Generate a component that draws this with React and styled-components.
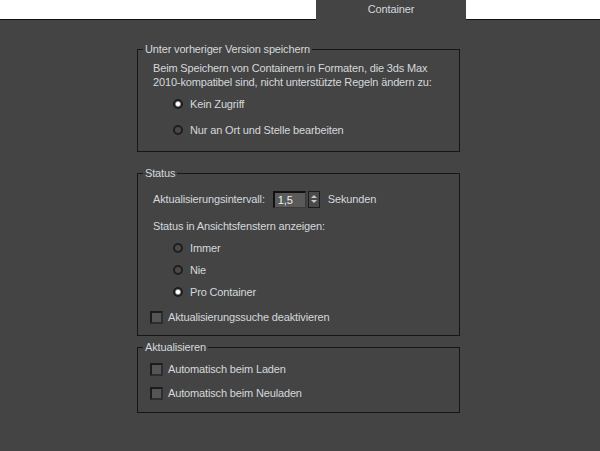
import styled, { createGlobalStyle } from "styled-components";

const GlobalStyle = createGlobalStyle`
  html, body {
    margin: 0;
    padding: 0;
    background: #444444;
  }
  body {
    font-family: "Liberation Sans", Arial, sans-serif;
    font-size: 11px;
    letter-spacing: -0.15px;
    color: #d4d8dc;
  }
`;

const Page = styled.div`
  width: 600px;
  height: 451px;
  background: #444444;
  overflow: hidden;
`;

const TabBar = styled.div`
  display: flex;
  height: 20px;
  background: #ffffff;
`;

const TabSpacer = styled.div`
  width: ${(p) => (p.$grow ? "auto" : "316px")};
  flex: ${(p) => (p.$grow ? 1 : "none")};
  border-bottom: 1px solid #111;
`;

const Tab = styled.div`
  width: 150px;
  background: #444444;
  display: flex;
  justify-content: center;
  align-items: center;
  line-height: 14px;
  padding-bottom: 2px;
  box-sizing: border-box;
`;

const Content = styled.div`
  display: flex;
  flex-direction: column;
  padding-left: 137px;
  width: 323px;
`;

const Group = styled.fieldset`
  margin: ${(p) => p.$top}px 0 0 0;
  padding: ${(p) => p.$pt}px 0 ${(p) => p.$pb}px 15px;
  border: 1px solid #161616;
  min-width: 0;
  display: flex;
  flex-direction: column;
`;

const Legend = styled.legend`
  padding: 0 2px;
  margin-left: -10px;
  line-height: 14px;
`;

const Text = styled.div`
  line-height: 14px;
  margin-top: ${(p) => p.$top || 0}px;
`;

const RadioRow = styled.label`
  display: flex;
  align-items: center;
  gap: 7px;
  height: 16px;
  margin-left: 20px;
  margin-top: ${(p) => p.$top || 0}px;
`;

const RadioDot = styled.span`
  width: 10px;
  height: 10px;
  border-radius: 50%;
  box-sizing: border-box;
  border: 2px solid #1e1e1e;
  background: ${(p) =>
    p.$on
      ? "radial-gradient(circle, #ffffff 0 1.8px, #9a9a9a 2.4px, #4e4e4e 4px)"
      : "#4a4a4a"};
`;

const CheckRow = styled.label`
  display: flex;
  align-items: center;
  gap: 5px;
  height: 14px;
  margin-left: -3px;
  margin-top: ${(p) => p.$top || 0}px;
`;

const CheckBox = styled.span`
  width: 13px;
  height: 13px;
  box-sizing: border-box;
  border: 2px solid #1c1c1c;
  border-right-color: #2e2e2e;
  border-bottom-color: #2e2e2e;
  background: #555555;
`;

const IntervalRow = styled.div`
  display: flex;
  align-items: center;
  height: 18px;
`;

const NumberField = styled.div`
  width: 33px;
  height: 17px;
  margin-left: 8px;
  box-sizing: border-box;
  border: 2px solid #111;
  border-right: 1px solid #3a3a3a;
  border-bottom: 1px solid #3a3a3a;
  background: #5a5a5a;
  color: #f0f0f0;
  line-height: 14px;
  padding-left: 3px;
`;

const Spinner = styled.div`
  width: 12px;
  height: 17px;
  margin-left: 2px;
  box-sizing: border-box;
  border: 1px solid #1c1c1c;
  background: #4a4a4a;
  display: flex;
  flex-direction: column;
  align-items: center;
  justify-content: space-around;
  padding: 2px 0;
`;

const Arrow = styled.span`
  width: 0;
  height: 0;
  border-left: 3px solid transparent;
  border-right: 3px solid transparent;
  ${(p) =>
    p.$up
      ? "border-bottom: 3px solid #c8c8c8;"
      : "border-top: 3px solid #c8c8c8;"}
`;

const Unit = styled.span`
  margin-left: 8px;
`;

function Radio({ on, top, children }) {
  return (
    <RadioRow $top={top}>
      <RadioDot $on={on} />
      {children}
    </RadioRow>
  );
}

function Check({ top, children }) {
  return (
    <CheckRow $top={top}>
      <CheckBox />
      {children}
    </CheckRow>
  );
}

export default function App() {
  return (
    <Page>
      <GlobalStyle />
      <TabBar>
        <TabSpacer />
        <Tab>Container</Tab>
        <TabSpacer $grow />
      </TabBar>
      <Content>
        <Group $top={22} $pt={5} $pb={13}>
          <Legend>Unter vorheriger Version speichern</Legend>
          <Text>
            Beim Speichern von Containern in Formaten, die 3ds Max
            <br />
            2010-kompatibel sind, nicht unterstützte Regeln ändern zu:
          </Text>
          <Radio on top={7}>Kein Zugriff</Radio>
          <Radio top={10}>Nur an Ort und Stelle bearbeiten</Radio>
        </Group>

        <Group $top={14} $pt={10} $pb={11}>
          <Legend>Status</Legend>
          <IntervalRow>
            Aktualisierungsintervall:
            <NumberField>1,5</NumberField>
            <Spinner>
              <Arrow $up />
              <Arrow />
            </Spinner>
            <Unit>Sekunden</Unit>
          </IntervalRow>
          <Text $top={11}>Status in Ansichtsfenstern anzeigen:</Text>
          <Radio top={7}>Immer</Radio>
          <Radio top={6}>Nie</Radio>
          <Radio on top={6}>Pro Container</Radio>
          <Check top={10}>Aktualisierungssuche deaktivieren</Check>
        </Group>

        <Group $top={4} $pt={8} $pb={12}>
          <Legend>Aktualisieren</Legend>
          <Check>Automatisch beim Laden</Check>
          <Check top={10}>Automatisch beim Neuladen</Check>
        </Group>
      </Content>
    </Page>
  );
}
